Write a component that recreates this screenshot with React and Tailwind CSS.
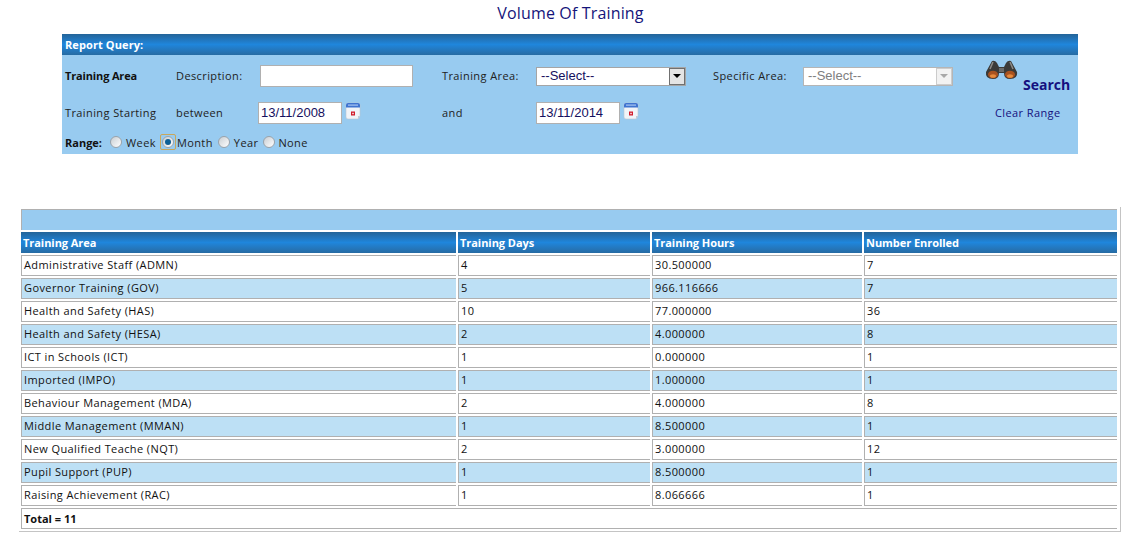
const rows = [
  ['Administrative Staff (ADMN)', '4', '30.500000', '7'],
  ['Governor Training (GOV)', '5', '966.116666', '7'],
  ['Health and Safety (HAS)', '10', '77.000000', '36'],
  ['Health and Safety (HESA)', '2', '4.000000', '8'],
  ['ICT in Schools (ICT)', '1', '0.000000', '1'],
  ['Imported (IMPO)', '1', '1.000000', '1'],
  ['Behaviour Management (MDA)', '2', '4.000000', '8'],
  ['Middle Management (MMAN)', '1', '8.500000', '1'],
  ['New Qualified Teache (NQT)', '2', '3.000000', '12'],
  ['Pupil Support (PUP)', '1', '8.500000', '1'],
  ['Raising Achievement (RAC)', '1', '8.066666', '1'],
]

const headers = ['Training Area', 'Training Days', 'Training Hours', 'Number Enrolled']

const CalendarIcon = () => (
  <svg width="16" height="18" viewBox="0 0 16 18" className="mt-[-5px] ml-[3px] shrink-0">
    <path d="M1 3 Q1 1 3 1 H13 Q15 1 15 3 V14 L13 17 H3 Q1 17 1 15 Z" fill="#f1f4f8" stroke="#bcc6d2" strokeWidth="0.6" />
    <path d="M1 3 Q1 1 3 1 H13 Q15 1 15 3 V5.5 H1 Z" fill="#3f74d0" />
    <rect x="3" y="2.5" width="10" height="1.2" fill="#a9c6f2" />
    <rect x="6" y="9.5" width="4" height="4" fill="#d01c2c" />
    <rect x="7.3" y="10.8" width="1.4" height="1.4" fill="#ffffff" />
    <path d="M13 17 L13 14 H15 Z" fill="#c4cad2" />
  </svg>
)

const Binoculars = () => (
  <svg width="33" height="20" viewBox="0 0 33 20" className="shrink-0">
    <path d="M7 1 Q10 0 12 3 L14 7 H19 L21 3 Q23 0 26 1 L32 12 Q33 19 25 19 Q19 19 19 13 H14 Q14 19 8 19 Q0 19 1 12 Z" fill="#3b3a38" />
    <path d="M8 2 L5 9 M25 2 L28 9" stroke="#8c8a86" strokeWidth="1.5" fill="none" />
    <rect x="14" y="8" width="5" height="4" fill="#6b6a68" />
    <ellipse cx="8" cy="14.5" rx="5" ry="3.8" fill="#a9521f" />
    <ellipse cx="25" cy="14.5" rx="5" ry="3.8" fill="#a9521f" />
    <ellipse cx="8" cy="16" rx="3" ry="1.8" fill="#e58a3c" />
    <ellipse cx="25" cy="16" rx="3" ry="1.8" fill="#e58a3c" />
  </svg>
)

const Radio = ({ checked }) => (
  <span className={checked
    ? 'mt-[-2px] flex h-4 w-4 shrink-0 items-center justify-center rounded-[2px] border border-[#c9a75c]'
    : 'mt-[-2px] flex h-4 w-4 shrink-0 items-center justify-center'}>
    <span className="flex h-3 w-3 items-center justify-center rounded-full border border-[#9aa3ab] bg-gradient-to-br from-[#c9ced3] to-[#ffffff]">
      {checked && <span className="h-[6px] w-[6px] rounded-full bg-[#0d5f96]" />}
    </span>
  </span>
)

const Select = ({ disabled }) => (
  <div className={disabled
    ? 'flex h-[19px] w-[150px] items-center justify-between border border-[#b5b5b5] bg-white font-["Liberation_Sans",sans-serif] text-[13px] tracking-normal text-[#808080]'
    : 'flex h-[19px] w-[150px] items-center justify-between border border-[#a5a5a5] bg-white font-["Liberation_Sans",sans-serif] text-[13px] tracking-normal text-[#15105e]'}>
    <span className="pl-[4px]">--Select--</span>
    <span className={disabled
      ? 'flex h-[17px] w-[16px] items-center justify-center border border-[#cccccc] bg-[#f2f2f2]'
      : 'flex h-[17px] w-[16px] items-center justify-center border border-[#707070] bg-[#e4e4e4]'}>
      <span className={disabled
        ? 'h-0 w-0 border-x-[4px] border-t-[4px] border-x-transparent border-t-[#a8a8a8]'
        : 'h-0 w-0 border-x-[4px] border-t-[4px] border-x-transparent border-t-[#000000]'} />
    </span>
  </div>
)

const DateBox = ({ value }) => (
  <div className="flex h-[22px] w-[84px] items-center border border-[#b0b0b0] bg-white pl-[2px] font-['Liberation_Sans',sans-serif] text-[13px] tracking-normal text-[#15105e]">
    {value}
  </div>
)

export default function App() {
  return (
    <div className="min-h-[536px] bg-white font-['Open_Sans',sans-serif] text-[11px] tracking-[0.4px] text-[#222222]">
      <h1 className="h-[34px] pt-[3px] pl-[13px] text-center text-[16px] leading-[20px] tracking-[0.15px] text-[#14147a]">Volume Of Training</h1>

      <div className="ml-[62px] h-[120px] w-[1016px] bg-[#98cbf0]">
        <div className="h-[21px] bg-gradient-to-b from-[#236499] via-[#1f86dc] to-[#266ba3] pl-[3px] text-[11px] font-bold leading-[21px] tracking-[0.1px] text-white">
          Report Query:
        </div>

        <div className="grid grid-cols-[111px_84px_182px_94px_177px_90px_182px_1fr] grid-rows-[42px_32px] items-center pl-[3px]">
          <span className="font-bold tracking-[-0.15px] text-[#111111]">Training Area</span>
          <span>Description:</span>
          <div className="h-[22px] w-[153px] border border-[#b0b0b0] bg-white" />
          <span>Training Area:</span>
          <Select />
          <span>Specific Area:</span>
          <Select disabled />
          <div className="flex items-start pt-[2px]">
            <Binoculars />
            <span className="mt-[16px] ml-[5px] text-[14px] font-bold leading-[18px] tracking-normal text-[#15107e]">Search</span>
          </div>

          <span>Training Starting</span>
          <span>between</span>
          <div className="ml-[-2px] flex items-center">
            <DateBox value="13/11/2008" />
            <CalendarIcon />
          </div>
          <span>and</span>
          <div className="flex items-center">
            <DateBox value="13/11/2014" />
            <CalendarIcon />
          </div>
          <span />
          <span />
          <span className="pl-[10px] text-[#15107e]">Clear Range</span>
        </div>

        <div className="flex h-[25px] items-center pt-[3px] pl-[3px]">
          <span className="mr-[6px] font-bold tracking-normal text-[#111111]">Range:</span>
          <Radio />
          <span className="mr-[4px] ml-[2px]">Week</span>
          <Radio checked />
          <span className="mr-[3px] ml-[1px]">Month</span>
          <Radio />
          <span className="mr-[3px] ml-[2px]">Year</span>
          <Radio />
          <span className="ml-[1px]">None</span>
        </div>
      </div>

      <div className="mt-[53px] ml-[19px] w-[1102px] border-r border-b border-[#c4c4c4]">
        <table className="w-[1100px] table-fixed border-separate border-spacing-[2px] text-[11px]">
          <colgroup>
            <col className="w-[435px]" />
            <col className="w-[192px]" />
            <col className="w-[210px]" />
            <col className="w-[253px]" />
          </colgroup>
          <thead>
            <tr>
              <th colSpan={4} className="h-[21px] border-t border-l border-[#b0b0b0] bg-[#98cbf0]" />
            </tr>
            <tr>
              {headers.map(h => (
                <th key={h} className="h-[21px] bg-gradient-to-b from-[#236499] via-[#1f86dc] to-[#266ba3] pt-[1px] pl-[2px] text-left font-bold tracking-[-0.05px] text-white">
                  {h}
                </th>
              ))}
            </tr>
          </thead>
          <tbody>
            {rows.map((row, i) => (
              <tr key={row[0]} className={i % 2 === 1 ? 'bg-[#bde0f5]' : 'bg-white'}>
                {row.map((cell, j) => (
                  <td key={j} className="h-[21px] border-t border-b border-l border-[#b0b0b0] pb-[1px] pl-[2px] text-[#111111]">{cell}</td>
                ))}
              </tr>
            ))}
            <tr>
              <td colSpan={4} className="h-[21px] border-t border-b border-l border-[#b0b0b0] pt-[1px] pl-[2px] font-bold tracking-normal text-[#111111]">Total = 11</td>
            </tr>
          </tbody>
        </table>
      </div>
    </div>
  )
}
